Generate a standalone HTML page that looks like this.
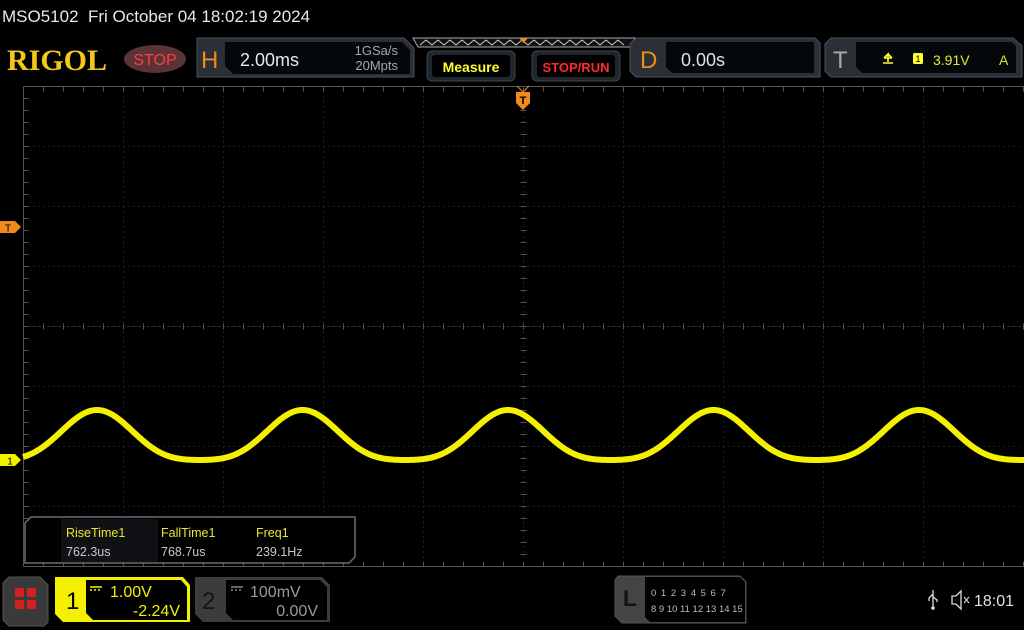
<!DOCTYPE html>
<html><head><meta charset="utf-8">
<style>
html,body{margin:0;padding:0;background:#000;width:1024px;height:630px;overflow:hidden}
svg{display:block}
text{font-family:"Liberation Sans","DejaVu Sans",sans-serif}
</style></head><body>
<svg id="s" width="1024" height="630" viewBox="0 0 1024 630" xmlns="http://www.w3.org/2000/svg">
<rect width="1024" height="630" fill="#000"/>
<text x="2" y="22" fill="#e8e8e8" font-size="17">MSO5102&#160;&#160;Fri October 04 18:02:19 2024</text>

<!-- RIGOL -->
<text x="7" y="70" fill="#f5c518" font-size="30" font-weight="bold" style="font-family:'Liberation Serif',serif">RIGOL</text>
<ellipse cx="155" cy="59" rx="31" ry="14" fill="#5a3434"/>
<text x="155" y="65" fill="#ff3a4a" font-size="16" text-anchor="middle">STOP</text>

<!-- H box -->
<path d="M197 38 H404 L414 48 V77 H197 Z" fill="#2a3036" stroke="#4a525a"/>
<path d="M225 42 H402 L410 50 V74 H233 L225 66 Z" fill="#05080b"/>
<text x="201" y="68" fill="#f08a1c" font-size="24">H</text>
<text x="240" y="66" fill="#e8e8e8" font-size="18">2.00ms</text>
<text x="398" y="55" fill="#a8a8a8" font-size="13" text-anchor="end">1GSa/s</text>
<text x="398" y="70" fill="#a8a8a8" font-size="13" text-anchor="end">20Mpts</text>

<!-- zigzag bar -->
<path d="M413 38 H635 L630 47 H418 Z" fill="#111" stroke="#aaa" stroke-width="1"/>
<polyline id="zz" fill="none" stroke="#ccc" stroke-width="1" points=""/>
<path d="M519 38 H528 L523.5 43 Z" fill="#f08a1c"/>

<!-- Measure -->
<rect x="427" y="51" width="88" height="30" rx="5" fill="#1f272d" stroke="#3a444c"/>
<rect x="432" y="55" width="78" height="22" rx="3" fill="#000"/>
<text x="471" y="72" fill="#ffff30" font-size="14" font-weight="bold" text-anchor="middle">Measure</text>
<rect x="532" y="51" width="88" height="30" rx="5" fill="#1f272d" stroke="#3a444c"/>
<rect x="537" y="55" width="78" height="22" rx="3" fill="#000"/>
<text x="576" y="72" fill="#ff2a2a" font-size="13" font-weight="bold" text-anchor="middle">STOP/RUN</text>

<!-- D box -->
<path d="M636 38 H815 L820 43 V77 H636 L630 71 V44 Z" fill="#2a3036" stroke="#4a525a"/>
<path d="M666 42 H814 V73 H672 L666 67 Z" fill="#05080b"/>
<text x="640" y="68" fill="#f08a1c" font-size="24">D</text>
<text x="681" y="66" fill="#e0e0e0" font-size="18">0.00s</text>

<!-- T box -->
<path d="M831 38 H1013 L1022 46 V77 H831 L825 71 V44 Z" fill="#2a3036" stroke="#4a525a"/>
<path d="M856 42 H1012 L1016 46 V73 H862 L856 67 Z" fill="#05080b"/>
<text x="833" y="68" fill="#aaa" font-size="24">T</text>
<path d="M883 63 H893 M888 62 V54 L884 58 M888 54 L892 58 M884 58 H892" stroke="#ffff30" stroke-width="1.6" fill="none"/>
<rect x="913" y="53" width="10" height="11" rx="1.5" fill="#ffff30"/>
<text x="918" y="62" fill="#000" font-size="9" text-anchor="middle">1</text>
<text x="933" y="65" fill="#e8e830" font-size="14">3.91V</text>
<text x="999" y="65" fill="#d8e830" font-size="14">A</text>

<!-- grid -->
<g id="grid"></g>

<!-- waveform -->
<polyline id="wave" fill="none" stroke="#f4f000" stroke-width="6" stroke-linejoin="round" points=""/>

<!-- markers -->
<path d="M0 221 H15 L21 227 L15 233 H0 Z" fill="#f08a1c"/>
<text x="8" y="231.5" fill="#000" font-size="10" text-anchor="middle">T</text>
<path d="M0 454 H15 L21 460 L15 466 H0 Z" fill="#f4f000"/>
<text x="10" y="464.5" fill="#000" font-size="10" text-anchor="middle">1</text>
<path d="M516 92 H530 V103 L523 110 L516 103 Z" fill="#f08a1c"/>
<path d="M517 86 L523 92 L529 86" stroke="#f08a1c" fill="none"/>
<text x="523" y="104" fill="#000" font-size="11" text-anchor="middle" font-weight="bold">T</text>

<!-- measurement box -->
<path d="M31 517 H355 V557 L349 563 H25 V523 Z" fill="#000" stroke="#6a6e72" stroke-width="1.5"/>
<rect x="61" y="519" width="97" height="43" fill="#0f1114"/>
<text x="66" y="537" fill="#e8e830" font-size="12.5">RiseTime1</text>
<text x="161" y="537" fill="#e8e830" font-size="12.5">FallTime1</text>
<text x="256" y="537" fill="#e8e830" font-size="12.5">Freq1</text>
<text x="66" y="556" fill="#c8c8c8" font-size="12.5">762.3us</text>
<text x="161" y="556" fill="#c8c8c8" font-size="12.5">768.7us</text>
<text x="256" y="556" fill="#c8c8c8" font-size="12.5">239.1Hz</text>

<!-- bottom: menu button -->
<path d="M9 577 H40 L48 585 V622 L44 626 H9 L3 620 V583 Z" fill="#3a3a3a" stroke="#555"/>
<rect x="15" y="588" width="9" height="9" fill="#d42020"/><rect x="27" y="588" width="9" height="9" fill="#d42020"/>
<rect x="15" y="600" width="9" height="9" fill="#d42020"/><rect x="27" y="600" width="9" height="9" fill="#d42020"/>

<!-- CH1 -->
<path d="M55 577 H183 L190 585 V622 H63 L55 614 Z" fill="#f4f000"/>
<path d="M86 580 H181 L187 587 V620 H93 L86 613 Z" fill="#000"/>
<text x="66" y="609" fill="#000" font-size="24">1</text>
<path d="M90 587 H102 M90 590 H92 M94 590 H96 M98 590 H100" stroke="#f4f000" stroke-width="1.5"/>
<text x="110" y="597" fill="#f4f000" font-size="16">1.00V</text>
<text x="180" y="616" fill="#f4f000" font-size="16" text-anchor="end">-2.24V</text>

<!-- CH2 -->
<path d="M195 577 H322 L330 585 V622 H203 L195 614 Z" fill="#3c3c3c"/>
<path d="M226 580 H320 L327 587 V620 H233 L226 613 Z" fill="#000"/>
<text x="202" y="609" fill="#141414" font-size="24">2</text>
<path d="M231 587 H243 M231 590 H233 M235 590 H237 M239 590 H241" stroke="#888" stroke-width="1.5"/>
<text x="250" y="597" fill="#999" font-size="16">100mV</text>
<text x="318" y="616" fill="#999" font-size="16" text-anchor="end">0.00V</text>

<!-- L box -->
<path d="M618 576 H740 L746 582 V623 H622 L615 616 V580 Z" fill="#444" stroke="#555"/>
<path d="M645 577 H740 L745 582 V622 H650 L645 617 Z" fill="#000"/>
<text x="623" y="606" fill="#111" font-size="22" font-weight="bold">L</text>
<text x="651" y="596" fill="#bbb" font-size="9.5" letter-spacing="1">0 1 2 3  4 5 6 7</text>
<text x="651" y="612" fill="#bbb" font-size="9.5">8  9 10 11  12 13 14 15</text>

<!-- status icons -->
<path d="M933 590 V608 M933 594 L929 598 V601 M933 597 L937 600 V602" stroke="#ddd" stroke-width="1.3" fill="none"/>
<circle cx="933" cy="608" r="1.8" fill="#ddd"/>
<path d="M952 596 H956 L961 591 V609 L956 604 H952 Z" fill="none" stroke="#ddd" stroke-width="1.3"/>
<path d="M964 597 L969 603 M969 597 L964 603" stroke="#ddd" stroke-width="1"/>
<text x="974" y="606" fill="#e0e0e0" font-size="16">18:01</text>
</svg>
<script>
(function(){
var NS="http://www.w3.org/2000/svg",g=document.getElementById("grid");
function ln(x1,y1,x2,y2,c,da,w){var l=document.createElementNS(NS,"line");l.setAttribute("x1",x1);l.setAttribute("y1",y1);l.setAttribute("x2",x2);l.setAttribute("y2",y2);l.setAttribute("stroke",c);l.setAttribute("stroke-width",w||1);if(da)l.setAttribute("stroke-dasharray",da);g.appendChild(l);}
var L=23.5,R=1023.5,T=86.5,B=566.5;
for(var i=1;i<10;i++){var x=L+i*100;ln(x,T,x,B,"#3c3c3c","1 4");}
for(var j=1;j<8;j++){var y=T+j*60;ln(L,y,R,y,"#3c3c3c","1 4");}
ln(L,T,R,T,"#555");ln(L,B,R,B,"#555");ln(L,T,L,B,"#555");
for(var x=L;x<=R;x+=20){ln(x,T,x,T+5,"#555");ln(x,B-5,x,B,"#555");ln(x,326.5-3,x,326.5+3,"#555");}
for(var y=T;y<=B;y+=12){ln(L,y,L+5,y,"#555");ln(523.5-3,y,523.5+3,y,"#555");}
ln(523.5,T,523.5,B,"#3c3c3c","1 4");ln(L,326.5,R,326.5,"#4a4a4a","1 3");
var p=[];for(var x=23;x<=1024;x+=1){var th=2*Math.PI*(x-97)/205.5+Math.PI/2;var v=Math.sin(th)-0.2*Math.cos(2*th)-0.2;p.push(x+","+(435-25*v).toFixed(1));}
document.getElementById("wave").setAttribute("points",p.join(" "));
var z=[];for(var x=420,k=0;x<=628;x+=6,k++){z.push(x+","+(k%2?40:45));}
document.getElementById("zz").setAttribute("points",z.join(" "));
})();
</script>
</body></html>
